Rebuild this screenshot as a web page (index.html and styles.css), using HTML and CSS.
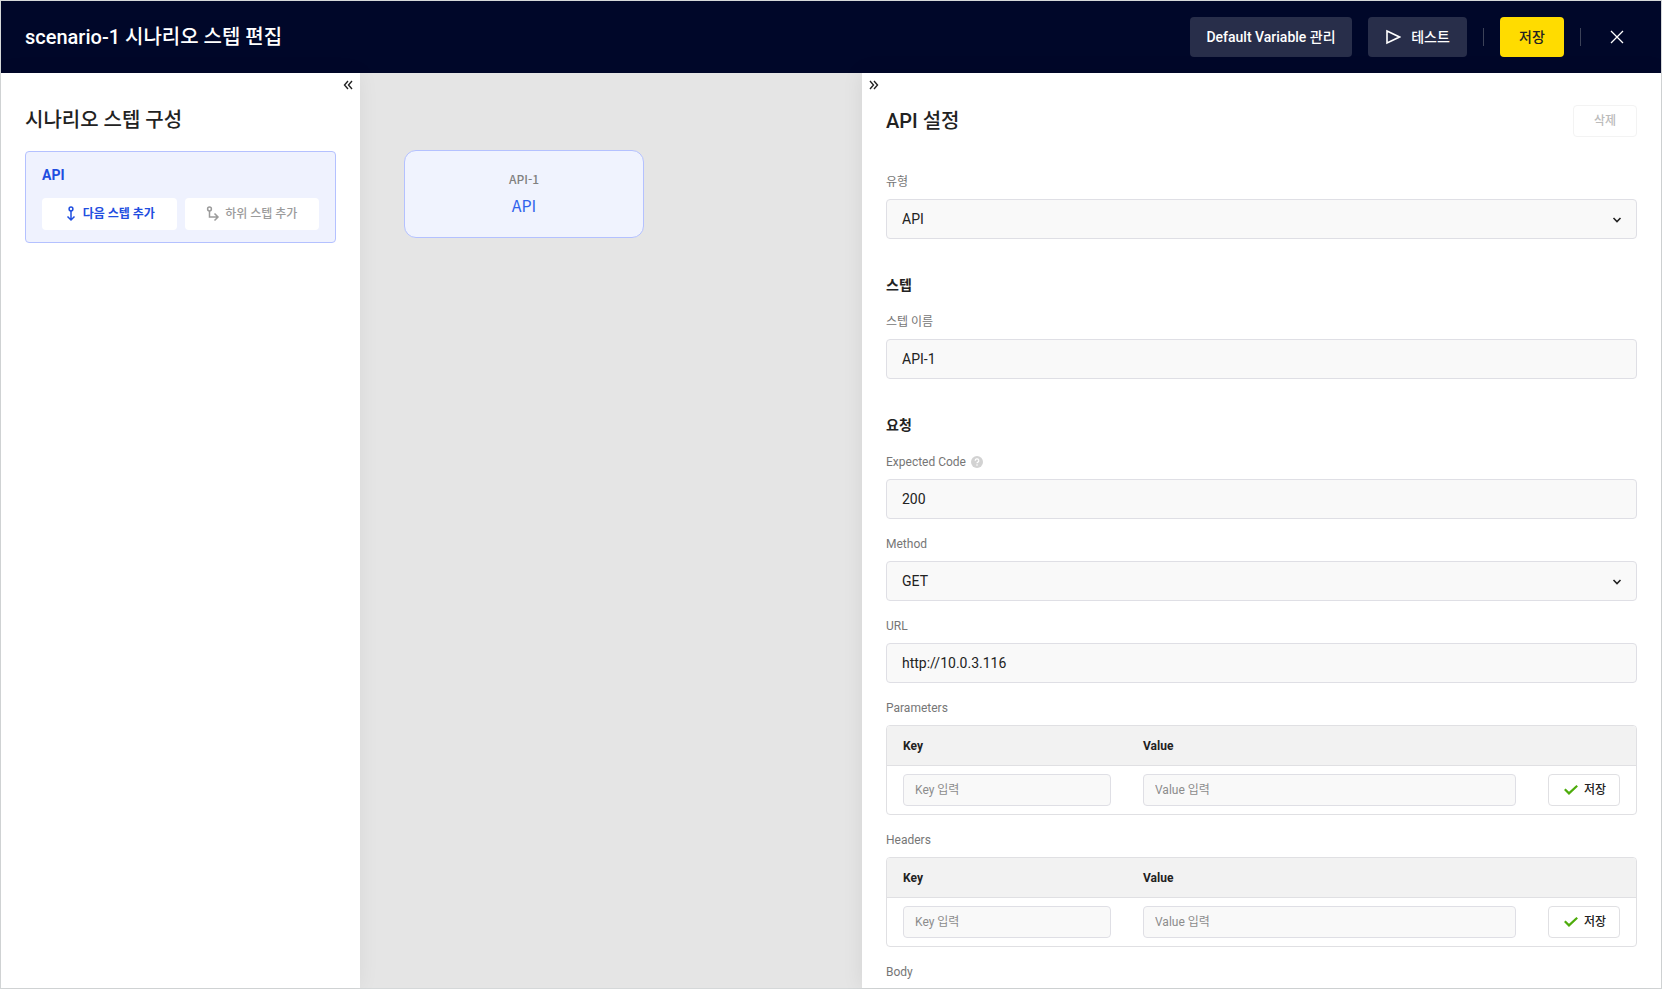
FILE: index.html
```html
<!DOCTYPE html>
<html lang="ko">
<head>
<meta charset="utf-8">
<title>시나리오 스텝 편집</title>
<link rel="stylesheet" href="styles.css">
</head>
<body>
<div class="app">
  <header class="topbar">
    <h1 class="topbar-title">scenario-1 시나리오 스텝 편집</h1>
    <div class="topbar-actions">
      <button type="button" class="btn btn-ghost btn-variable">Default Variable 관리</button>
      <button type="button" class="btn btn-ghost btn-test">
        <svg width="16" height="16" viewBox="0 0 16 16" fill="none" stroke="currentColor" stroke-width="1.6"><path d="M2 2l12.500 6L2 14z"/></svg>
        테스트
      </button>
      <span class="divider"></span>
      <button type="button" class="btn btn-primary">저장</button>
      <span class="divider"></span>
      <button type="button" class="btn-close" aria-label="닫기">
        <svg width="14" height="14" viewBox="0 0 14 14" fill="none" stroke="currentColor" stroke-width="1.3"><path d="M1 1l12 12M13 1L1 13"/></svg>
      </button>
    </div>
  </header>
  <main class="workspace">
    <aside class="sidebar">
      <button type="button" class="fold fold-left" aria-label="접기">
        <svg width="10" height="10" viewBox="0 0 10 10" fill="none" stroke="currentColor" stroke-width="1.4"><path d="M5 1L1.500 5 5 9M9 1L5.500 5 9 9"/></svg>
      </button>
      <h2 class="heading">시나리오 스텝 구성</h2>
      <section class="step-card">
        <h3 class="step-name">API</h3>
        <div class="step-actions">
          <button type="button" class="step-btn step-btn-next">
            <svg width="14" height="16" viewBox="0 0 14 16" fill="none" stroke="currentColor" stroke-width="1.5"><circle cx="7" cy="3" r="1.900"/><path d="M7 5v8.500M3.500 10.500L7 14l3.500-3.500"/></svg>
            다음 스텝 추가
          </button>
          <button type="button" class="step-btn" disabled>
            <svg width="14" height="16" viewBox="0 0 14 16" fill="none" stroke="currentColor" stroke-width="1.5"><circle cx="3.500" cy="3" r="1.900"/><path d="M3.500 5v6h8M8.500 7.500l3.500 3.500-3.500 3.500"/></svg>
            하위 스텝 추가
          </button>
        </div>
      </section>
    </aside>
    <section class="canvas">
      <div class="node">
        <span class="node-name">API-1</span>
        <span class="node-type">API</span>
      </div>
    </section>
    <form class="settings">
      <button type="button" class="fold fold-right" aria-label="접기">
        <svg width="10" height="10" viewBox="0 0 10 10" fill="none" stroke="currentColor" stroke-width="1.4"><path d="M1 1l3.500 4L1 9M5 1l3.500 4L5 9"/></svg>
      </button>
      <div class="settings-head">
        <h2 class="heading">API 설정</h2>
        <button type="button" class="btn-delete" disabled>삭제</button>
      </div>
      <div class="group">
        <div class="field">
          <label class="label" for="type">유형</label>
          <div class="select">
            <select id="type" class="control"><option>API</option></select>
            <svg class="caret" width="10" height="6" viewBox="0 0 10 6" fill="none" stroke="currentColor" stroke-width="1.600"><path d="M1.500 1L5 4.500 8.500 1"/></svg>
          </div>
        </div>
      </div>
      <div class="group">
        <h3 class="group-title">스텝</h3>
        <div class="field">
          <label class="label" for="name">스텝 이름</label>
          <input id="name" class="control" type="text" value="API-1">
        </div>
      </div>
      <div class="group">
        <h3 class="group-title">요청</h3>
        <div class="field">
          <label class="label" for="code">Expected Code
            <svg width="12" height="12" viewBox="0 0 12 12"><circle cx="6" cy="6" r="6" fill="#d2d2d2"/><path d="M4.200 4.700a1.800 1.700 0 1 1 2.700 1.400Q6 6.600 6 7.300" fill="none" stroke="#fff" stroke-width="1.200"/><circle cx="6" cy="9" r=".8" fill="#fff"/></svg>
          </label>
          <input id="code" class="control" type="text" value="200">
        </div>
        <div class="field">
          <label class="label" for="method">Method</label>
          <div class="select">
            <select id="method" class="control"><option>GET</option></select>
            <svg class="caret" width="10" height="6" viewBox="0 0 10 6" fill="none" stroke="currentColor" stroke-width="1.600"><path d="M1.500 1L5 4.500 8.500 1"/></svg>
          </div>
        </div>
        <div class="field">
          <label class="label" for="url">URL</label>
          <input id="url" class="control" type="text" value="http://10.0.3.116">
        </div>
        <div class="field">
          <span class="label" id="params">Parameters</span>
          <table class="pairs" aria-labelledby="params">
            <colgroup><col class="col-key"><col><col class="col-save"></colgroup>
            <thead><tr><th>Key</th><th>Value</th><th></th></tr></thead>
            <tbody><tr>
              <td><input class="control control-small" type="text" placeholder="Key 입력" aria-label="Key"></td>
              <td><input class="control control-small" type="text" placeholder="Value 입력" aria-label="Value"></td>
              <td><button type="button" class="btn-save"><svg width="14" height="10" viewBox="0 0 14 10" fill="none" stroke="#4eac0c" stroke-width="2.200"><path d="M.8 4.200L5 8.400 13.200.8"/></svg>저장</button></td>
            </tr></tbody>
          </table>
        </div>
        <div class="field">
          <span class="label" id="headers">Headers</span>
          <table class="pairs" aria-labelledby="headers">
            <colgroup><col class="col-key"><col><col class="col-save"></colgroup>
            <thead><tr><th>Key</th><th>Value</th><th></th></tr></thead>
            <tbody><tr>
              <td><input class="control control-small" type="text" placeholder="Key 입력" aria-label="Key"></td>
              <td><input class="control control-small" type="text" placeholder="Value 입력" aria-label="Value"></td>
              <td><button type="button" class="btn-save"><svg width="14" height="10" viewBox="0 0 14 10" fill="none" stroke="#4eac0c" stroke-width="2.200"><path d="M.8 4.200L5 8.400 13.200.8"/></svg>저장</button></td>
            </tr></tbody>
          </table>
        </div>
        <div class="field">
          <span class="label">Body</span>
        </div>
      </div>
    </form>
  </main>
</div>
</body>
</html>
```
FILE: styles.css
```css
*, *::before, *::after { box-sizing: border-box; }

body {
  margin: 0;
  color: #222;
  background: #fff;
  font: 400 14px/20px Roboto, "Noto Sans CJK KR", sans-serif;
}

h1, h2, h3 { margin: 0; }

button, input, select { font: inherit; color: inherit; margin: 0; }
button { border: 0; padding: 0; background: none; }
svg { display: block; flex: none; }

.app {
  display: flex;
  flex-direction: column;
  min-height: 100vh;
  border: 1px solid #d5d8d9;
}

.topbar {
  display: flex;
  align-items: center;
  justify-content: space-between;
  padding: 16px 24px;
  color: #fff;
  background: #000729;
}
.topbar-title { font-size: 20px; line-height: 28px; font-weight: 500; }
.topbar-actions { display: flex; align-items: center; gap: 16px; }

.btn {
  display: flex;
  align-items: center;
  justify-content: center;
  height: 40px;
  padding: 0 16px;
  border-radius: 4px;
  font-weight: 500;
}
.btn-ghost { background: #282e4a; }
.btn-variable { width: 162px; }
.btn-test { gap: 10px; width: 99px; }
.btn-primary { width: 64px; color: #222; background: #ffdc00; }
.btn-close { display: grid; place-items: center; width: 40px; height: 40px; }
.divider { width: 1px; height: 18px; background: #3c4258; }

.workspace {
  flex: 1;
  display: grid;
  grid-template-columns: 359px minmax(0, 1fr) 799px;
}

.sidebar, .settings { position: relative; background: #fff; padding: 0 24px; }
.sidebar { padding-top: 33px; box-shadow: 0 0 20px rgba(0, 0, 0, .06); }
.settings { padding-top: 32px; box-shadow: 0 0 20px rgba(0, 0, 0, .08); }

.fold { position: absolute; top: 7px; }
.fold-left { right: 7px; }
.fold-right { left: 7px; }

.heading { font-size: 20px; line-height: 28px; font-weight: 500; }

.step-card {
  margin-top: 17px;
  padding: 13px 16px 12px;
  border: 1px solid #b4c1ff;
  border-radius: 4px;
  background: #eff2fe;
}
.step-name { font-size: 14px; font-weight: 700; color: #1f4ee0; }
.step-actions { display: grid; grid-template-columns: 1fr 1fr; gap: 8px; margin-top: 13px; }
.step-btn {
  display: flex;
  align-items: center;
  justify-content: center;
  gap: 5px;
  height: 32px;
  border-radius: 4px;
  background: #fff;
  color: #9b9b9b;
  font-size: 12px;
  font-weight: 500;
}
.step-btn-next { color: #1f4ee0; font-weight: 700; }

.canvas { padding: 77px 44px; background: #e5e5e5; }
.node {
  display: flex;
  flex-direction: column;
  align-items: center;
  gap: 4px;
  width: 240px;
  height: 88px;
  padding-top: 18px;
  border: 1px solid #b4c1ff;
  border-radius: 12px;
  background: #f0f3fe;
  font-family: "Noto Sans CJK KR", sans-serif;
}
.node-name { font-size: 12px; line-height: 20px; font-weight: 500; color: #808080; }
.node-type { font-size: 16px; line-height: 24px; color: #2f62ec; }

.settings-head { display: flex; align-items: center; justify-content: space-between; }
.btn-delete {
  width: 64px;
  height: 32px;
  border: 1px solid #f3f3f3;
  border-radius: 4px;
  color: #bbb;
  font-size: 12px;
  font-weight: 500;
}

.group { display: flex; flex-direction: column; gap: 15px; margin-top: 36px; }
.settings-head + .group { margin-top: 35px; }
.group-title { font-size: 14px; font-weight: 700; margin-bottom: 2px; }
.field { display: flex; flex-direction: column; gap: 7px; }
.label { display: flex; align-items: center; gap: 5px; font-size: 12px; color: #767676; }

.control {
  display: block;
  width: 100%;
  height: 40px;
  padding: 0 15px;
  border: 1px solid #dfdfe5;
  border-radius: 4px;
  background: #f9f9f9;
  appearance: none;
}
.control-small { height: 32px; padding: 0 11px; font-size: 12px; }
.control::placeholder { color: #8c8c8c; opacity: 1; }

.select { position: relative; }
.caret { position: absolute; right: 15px; top: 18px; pointer-events: none; }

.pairs {
  width: 100%;
  table-layout: fixed;
  border: 1px solid #e0e0e3;
  border-radius: 4px;
  border-collapse: separate;
  border-spacing: 0;
  overflow: hidden;
}
.col-key { width: 240px; }
.col-save { width: 104px; }
.pairs th {
  height: 40px;
  padding: 0 16px;
  border-bottom: 1px solid #e0e0e3;
  background: #f2f2f2;
  font-size: 12px;
  font-weight: 700;
  text-align: left;
}
.pairs td { height: 48px; padding: 8px 16px; }
.btn-save {
  display: flex;
  align-items: center;
  justify-content: center;
  gap: 6px;
  width: 72px;
  height: 32px;
  padding-left: 2px;
  border: 1px solid #e0e0e3;
  border-radius: 4px;
  background: #fff;
  font-size: 12px;
  font-weight: 500;
}
```
